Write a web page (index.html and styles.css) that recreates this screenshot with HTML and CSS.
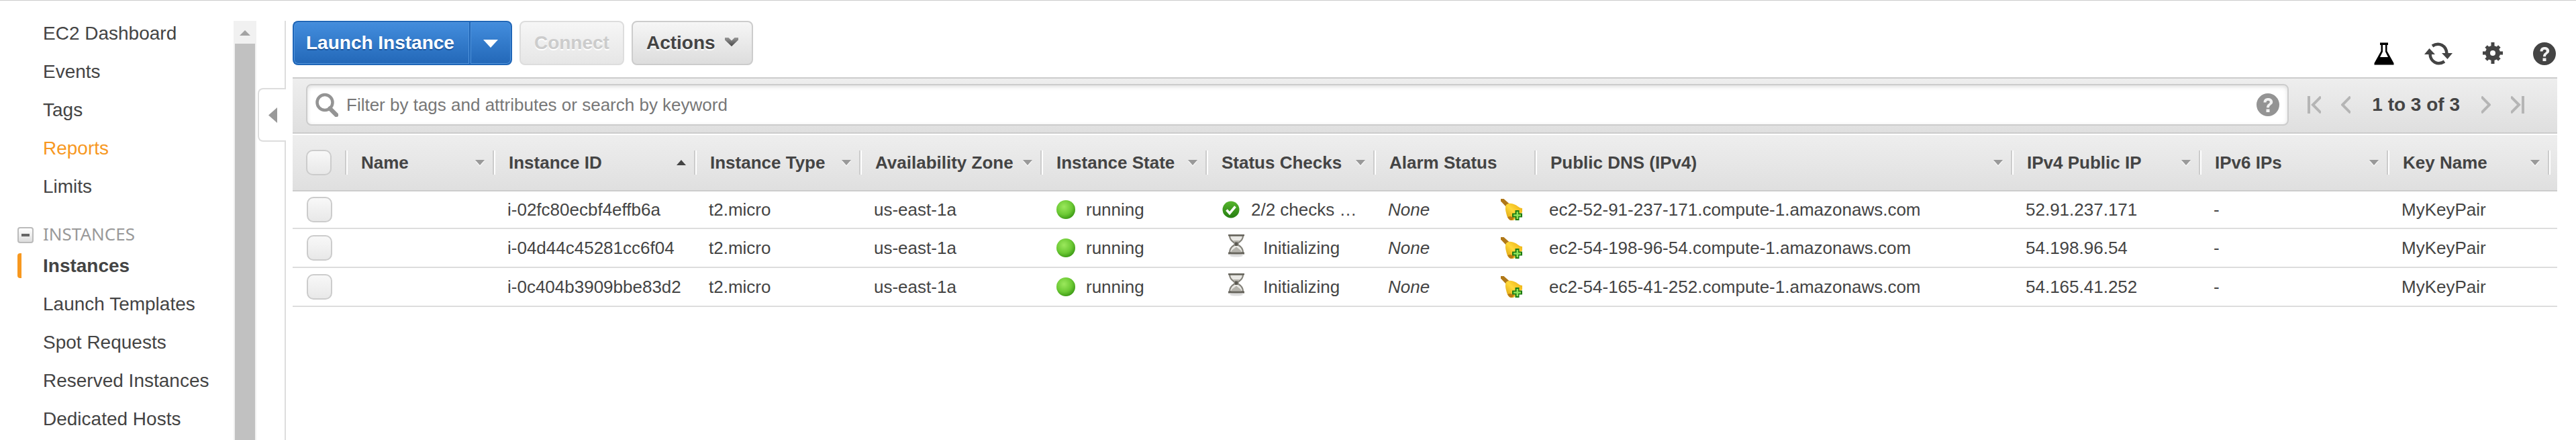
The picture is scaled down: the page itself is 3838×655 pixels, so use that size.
FILE: index.html
```html
<!DOCTYPE html>
<html lang="en">
<head>
<meta charset="utf-8">
<title>EC2 Management Console</title>
<link rel="stylesheet" href="styles.css">
</head>
<body>
<svg class="sprite" aria-hidden="true">
  <defs>
    <radialGradient id="g-ball" cx="0.4" cy="0.35" r="0.7"><stop offset="0" stop-color="#9be85c"/><stop offset="0.6" stop-color="#6cc934"/><stop offset="1" stop-color="#379512"/></radialGradient>
    <linearGradient id="g-ok" x1="0" y1="0" x2="0" y2="1"><stop offset="0" stop-color="#55b52c"/><stop offset="1" stop-color="#257d10"/></linearGradient>
    <linearGradient id="g-bell" x1="0" y1="1" x2="1" y2="0"><stop offset="0" stop-color="#d89a08"/><stop offset="0.5" stop-color="#ffd93a"/><stop offset="1" stop-color="#e8a80c"/></linearGradient>
    <linearGradient id="g-chev" x1="0" y1="0" x2="0" y2="1"><stop offset="0" stop-color="#999"/><stop offset="1" stop-color="#444"/></linearGradient>
  </defs>
  <symbol id="i-help" viewBox="0 0 34 34"><circle cx="17" cy="17" r="17" fill="currentColor"/><path d="M10.500 13.500C10.500 9 13.500 7 17.200 7s7 2 7 5.700c0 4.500-5.200 4.300-5.200 8.500h-4c0-5.800 4.800-5.600 4.800-8.300 0-1.400-1-2.200-2.600-2.200-1.700 0-2.600.9-2.700 2.800z" fill="#f2f2f2"/><rect x="14.500" y="23.500" width="5" height="4.500" fill="#f2f2f2"/></symbol>
  <symbol id="i-ball" viewBox="0 0 30 30"><circle cx="15" cy="15" r="15" fill="url(#g-ball)"/></symbol>
  <symbol id="i-ok" viewBox="0 0 26 26"><circle cx="13" cy="13" r="12.500" fill="url(#g-ok)"/><path d="M6.500 13.500l4.500 5 8.500-10" fill="none" stroke="#fff" stroke-width="3.500"/></symbol>
  <symbol id="i-glass" viewBox="0 0 26 42"><ellipse cx="13" cy="32.500" rx="10" ry="2" fill="#ddd"/><path d="M3 2.500h20c0 6-3 8-7.500 11.500v2.500C20 19 23 22 23 28H3c0-6 3-9 7.500-11.500V14C6 10.500 3 8.500 3 2.500z" fill="#e9e8e4" stroke="#85837b" stroke-width="2.200"/><path d="M1 1h24v2.500H1zM1 27.500h24v3H1z" fill="#66645c"/><path d="M8 10h10l-5 5zM5 27.500c1-4 5-5 8-8 3 3 7 4 8 8z" fill="#b5b3ac"/><path d="M11 12.500h4v5.500h-4z" fill="#5a5850"/></symbol>
  <symbol id="i-bell" viewBox="0 0 32 32"><path d="M0 0h4.500l9 8-4.500 5-9-9.500z" fill="#b07818"/><path d="M8 9c4-4 10-2 14 0 4 2 6 5 10 5v6L19 32h-5c-4-3-5-7-6-11-1-4-2-8 0-12z" fill="url(#g-bell)"/><path d="M10 27c1 3 4 5 7 5l3-4-6-2z" fill="#b87a14"/><path d="M21.500 17h6v4.500H32v6h-4.500V32h-6v-4.500H17v-6h4.500z" fill="#1d7a12"/><path d="M23.500 19h2.500v4.300h4v2.400h-4V30h-2.500v-4.300H19v-2.400h4.500z" fill="#8ee35a"/></symbol>
</svg>

<div class="console">
  <aside class="sidebar">
    <nav class="nav" aria-label="EC2">
      <ul class="nav-list">
        <li><a href="#">EC2 Dashboard</a></li>
        <li><a href="#">Events</a></li>
        <li><a href="#">Tags</a></li>
        <li><a href="#" class="hot">Reports</a></li>
        <li><a href="#">Limits</a></li>
      </ul>
      <div class="nav-group">
        <button class="fold" type="button" aria-label="Collapse instances"><span class="minus"></span></button>
        <span>INSTANCES</span>
      </div>
      <ul class="nav-list">
        <li class="current"><a href="#">Instances</a></li>
        <li><a href="#">Launch Templates</a></li>
        <li><a href="#">Spot Requests</a></li>
        <li><a href="#">Reserved Instances</a></li>
        <li><a href="#">Dedicated Hosts</a></li>
      </ul>
    </nav>
    <div class="scroll"><div class="scroll-up"><svg width="16" height="8" viewBox="0 0 16 8"><path d="M0 8l8-8 8 8z" fill="#a3a3a3"/></svg></div><div class="scroll-thumb"></div></div>
    <div class="splitter">
      <div class="split-top"></div>
      <button class="split-tab" type="button" aria-label="Hide navigation"><svg width="13" height="23" viewBox="0 0 13 23"><path d="M13 0v23L0 11.500z" fill="#999"/></svg></button>
      <div class="split-rest"></div>
    </div>
  </aside>

  <main class="main">
    <div class="actions">
      <div class="split-button">
        <button class="btn primary launch" type="button">Launch Instance</button>
        <button class="btn primary more" type="button" aria-label="More launch options"><svg width="22" height="12" viewBox="0 0 22 12"><path d="M0 0h22L11 12z" fill="#fff"/></svg></button>
      </div>
      <button class="btn" type="button" disabled>Connect</button>
      <button class="btn menu" type="button">Actions <svg width="20" height="14" viewBox="0 0 20 14"><path d="M0 1h5.500L10 5.500 14.500 1H20v3.500L10 14 0 4.500z" fill="url(#g-chev)"/></svg></button>
      <div class="tools">
        <button type="button" aria-label="Experiments"><svg width="30" height="34" viewBox="0 0 30 34"><path d="M9 0.500h12v3.500h-1.500v9L29.500 31v2.500H0.500V31L10.500 13V4H9z" fill="#000"/><path d="M13 4h4v10l4 8H9l4-8z" fill="#fff"/></svg></button>
        <button type="button" aria-label="Refresh"><svg width="42" height="34" viewBox="0 0 42 34"><path d="M12 5.500C22-1 33 5 33.500 17M30 28.500C20 35 9 29 8.500 17" fill="none" stroke="#444" stroke-width="4.500"/><path d="M26 16h16l-7.500 9zM0 18h16L7.500 9z" fill="#444"/></svg></button>
        <button type="button" aria-label="Settings"><svg width="30" height="34" viewBox="0 0 30 34"><g fill="#444"><circle cx="15" cy="16" r="11"/><path d="M12.500 0h5v32h-5zM0 13.500h30v5H0z"/><path d="M12.500 2h5v28h-5z" transform="rotate(45 15 16)"/><path d="M12.500 2h5v28h-5z" transform="rotate(-45 15 16)"/></g><circle cx="15" cy="16" r="4" fill="#fff"/></svg></button>
        <button type="button" aria-label="Help"><svg width="34" height="34"><use href="#i-help"/></svg></button>
      </div>
    </div>

    <div class="filter">
      <label class="search">
        <svg width="34" height="36" viewBox="0 0 34 36"><circle cx="14" cy="14.500" r="11.500" fill="none" stroke="#949494" stroke-width="4.500"/><path d="M21.500 23.500l9.500 9.500" stroke="#949494" stroke-width="6.500" stroke-linecap="round"/></svg>
        <input type="text" aria-label="Filter" placeholder="Filter by tags and attributes or search by keyword">
        <svg class="hint" width="34" height="34"><use href="#i-help"/></svg>
      </label>
      <div class="pager">
        <button type="button" aria-label="First page"><svg width="20" height="26" viewBox="0 0 20 26"><path d="M2 0v26M20 1L8 13l12 12"/></svg></button>
        <button type="button" aria-label="Previous page"><svg width="14" height="26" viewBox="0 0 14 26"><path d="M14 1L2 13l12 12"/></svg></button>
        <span class="count">1 to 3 of 3</span>
        <button type="button" aria-label="Next page"><svg width="14" height="26" viewBox="0 0 14 26"><path d="M0 1l12 12L0 25"/></svg></button>
        <button type="button" aria-label="Last page"><svg width="20" height="26" viewBox="0 0 20 26"><path d="M0 1l12 12L0 25M18 0v26"/></svg></button>
      </div>
    </div>

    <table class="grid">
      <colgroup><col class="w-check"><col class="w-name"><col class="w-id"><col class="w-type"><col class="w-zone"><col class="w-state"><col class="w-checks"><col class="w-alarm"><col class="w-dns"><col class="w-ip"><col class="w-ip"><col class="w-key"><col class="w-end"></colgroup>
      <thead>
        <tr>
          <th><div class="head check"><input type="checkbox" aria-label="Select all"></div></th>
          <th><div class="head">Name<i class="down"></i></div></th>
          <th><div class="head">Instance ID<i class="up"></i></div></th>
          <th><div class="head">Instance Type<i class="down"></i></div></th>
          <th><div class="head">Availability Zone<i class="down"></i></div></th>
          <th><div class="head">Instance State<i class="down"></i></div></th>
          <th><div class="head">Status Checks<i class="down"></i></div></th>
          <th><div class="head">Alarm Status</div></th>
          <th><div class="head">Public DNS (IPv4)<i class="down"></i></div></th>
          <th><div class="head">IPv4 Public IP<i class="down"></i></div></th>
          <th><div class="head">IPv6 IPs<i class="down"></i></div></th>
          <th><div class="head">Key Name<i class="down"></i></div></th>
          <th></th>
        </tr>
      </thead>
      <tbody>
        <tr>
          <td class="pick"><input type="checkbox" aria-label="Select i-02fc80ecbf4effb6a"></td><td></td><td>i-02fc80ecbf4effb6a</td><td>t2.micro</td><td>us-east-1a</td>
          <td><div class="state"><svg width="28" height="30"><use href="#i-ball"/></svg>running</div></td>
          <td><div class="state"><svg width="28" height="26"><use href="#i-ok"/></svg>2/2 checks …</div></td>
          <td><div class="alarm"><em>None</em><svg width="32" height="32"><use href="#i-bell"/></svg></div></td>
          <td>ec2-52-91-237-171.compute-1.amazonaws.com</td><td>52.91.237.171</td><td>-</td><td>MyKeyPair</td><td></td>
        </tr>
        <tr>
          <td class="pick"><input type="checkbox" aria-label="Select i-04d44c45281cc6f04"></td><td></td><td>i-04d44c45281cc6f04</td><td>t2.micro</td><td>us-east-1a</td>
          <td><div class="state"><svg width="28" height="30"><use href="#i-ball"/></svg>running</div></td>
          <td><div class="state wait"><svg width="28" height="42"><use href="#i-glass"/></svg>Initializing</div></td>
          <td><div class="alarm"><em>None</em><svg width="32" height="32"><use href="#i-bell"/></svg></div></td>
          <td>ec2-54-198-96-54.compute-1.amazonaws.com</td><td>54.198.96.54</td><td>-</td><td>MyKeyPair</td><td></td>
        </tr>
        <tr>
          <td class="pick"><input type="checkbox" aria-label="Select i-0c404b3909bbe83d2"></td><td></td><td>i-0c404b3909bbe83d2</td><td>t2.micro</td><td>us-east-1a</td>
          <td><div class="state"><svg width="28" height="30"><use href="#i-ball"/></svg>running</div></td>
          <td><div class="state wait"><svg width="28" height="42"><use href="#i-glass"/></svg>Initializing</div></td>
          <td><div class="alarm"><em>None</em><svg width="32" height="32"><use href="#i-bell"/></svg></div></td>
          <td>ec2-54-165-41-252.compute-1.amazonaws.com</td><td>54.165.41.252</td><td>-</td><td>MyKeyPair</td><td></td>
        </tr>
      </tbody>
    </table>
  </main>
</div>
</body>
</html>
```
FILE: styles.css
```css
* { box-sizing: border-box; }
body {
  margin: 0;
  background: #fff;
  color: #444;
  font-family: "Liberation Sans", Arial, sans-serif;
  font-size: 26px;
}
button { font: inherit; cursor: pointer; }
svg { display: block; flex: none; }
.sprite { position: absolute; width: 0; height: 0; }

.console {
  display: flex;
  height: 100vh;
  padding-top: 30px;
  border-top: 1px solid #ccc;
  overflow: hidden;
}

/* Sidebar */
.sidebar { display: flex; flex: none; width: 426px; }
.nav { flex: 1; overflow: hidden; padding-left: 26px; }
.nav-list { list-style: none; margin: 0; padding: 0; }
.nav-list li { display: flex; align-items: center; height: 37px; margin-bottom: 20px; padding-left: 38px; }
.nav-list a { color: #444; font-size: 28px; line-height: 32px; text-decoration: none; white-space: nowrap; }
.nav-list .hot { color: #f7981f; }
.nav-list .current { padding-left: 32px; border-left: 6px solid #f7981f; border-radius: 4px 0 0 4px; }
.current a { font-weight: bold; }
.nav-group {
  display: flex;
  align-items: center;
  gap: 14px;
  height: 36px;
  margin: 34px 0 11px;
  color: #999;
  font-family: "Noto Sans", sans-serif;
}
.fold {
  display: flex;
  align-items: center;
  justify-content: center;
  width: 24px;
  height: 24px;
  margin-top: 4px;
  padding: 0;
  border: 2px solid #bbb;
  border-radius: 4px;
  background: linear-gradient(#fff, #ddd);
}
.minus { width: 12px; height: 4px; background: #666; }

.scroll { display: flex; flex: none; flex-direction: column; width: 34px; background: #f1f1f1; }
.scroll-up { display: flex; align-items: center; justify-content: center; height: 34px; padding-top: 2px; }
.scroll-thumb { flex: 1; margin: 0 2px; background: #c1c1c1; }

.splitter { display: flex; flex-direction: column; flex: none; width: 44px; padding-left: 2px; }
.split-top { height: 100px; border-right: 2px solid #ddd; }
.split-tab {
  display: flex;
  align-items: center;
  justify-content: flex-end;
  height: 80px;
  padding: 0 13px;
  border: 2px solid #ddd;
  border-right: 0;
  border-radius: 8px 0 0 8px;
  background: #fff;
}
.split-rest { flex: 1; border-right: 2px solid #ddd; }

/* Actions */
.main { flex: 1; min-width: 0; padding: 0 28px 0 10px; }
.actions { display: flex; align-items: flex-start; gap: 11px; height: 84px; }
.btn {
  display: flex;
  align-items: center;
  height: 66px;
  padding: 0 20px;
  border: 2px solid #ccc;
  border-radius: 8px;
  background: linear-gradient(#f6f6f6, #ddd);
  color: #444;
  font-size: 28px;
  font-weight: bold;
  text-shadow: 0 2px 0 #fff;
}
.btn:disabled { border-color: #ddd; background: linear-gradient(#f6f6f6, #e6e6e6); color: #ccc; }
.menu { gap: 14px; }
.menu svg { margin-bottom: 4px; }
.split-button { display: flex; }
.primary {
  border-color: #1f66b8;
  background: linear-gradient(#438ddd, #2368b8);
  box-shadow: inset 0 0 0 1px #5294db;
  color: #fff;
  text-shadow: 0 2px 0 #1c559b;
}
.launch { padding: 0 22px 0 18px; border-right: 0; border-radius: 8px 0 0 8px; }
.more { border-radius: 0 8px 8px 0; padding: 2px 19px 0; }
.tools { display: flex; align-items: center; gap: 45px; height: 98px; margin-left: auto; padding: 0 2px; }
.tools button { padding: 0; border: 0; background: none; color: #444; }

/* Filter bar */
.filter {
  display: flex;
  align-items: center;
  height: 84px;
  padding: 0 49px 2px 20px;
  border-top: 2px solid #ccc;
  border-bottom: 2px solid #ccc;
  background: linear-gradient(#eee, #dfdfdf);
}
.search {
  display: flex;
  align-items: center;
  flex: 1;
  gap: 12px;
  height: 62px;
  padding: 0 12px;
  border: 2px solid #ccc;
  border-radius: 8px;
  background: #fff;
  box-shadow: inset 0 2px 6px #ddd;
}
.search input { flex: 1; min-width: 0; padding: 0; border: 0; outline: 0; background: none; color: #444; font: inherit; }
.search input::placeholder { color: #777; opacity: 1; }
.hint { color: #949494; }
.pager { display: flex; align-items: center; gap: 30px; margin-left: 28px; }
.pager button { padding: 0; border: 0; background: none; }
.pager path { fill: none; stroke: #b5b5b5; stroke-width: 4; }
.count { margin: 0 2px; font-size: 28px; font-weight: bold; }

/* Instances table */
.grid { width: 100%; margin-top: 2px; border-collapse: separate; border-spacing: 0; table-layout: fixed; }
.w-check { width: 82px; }
.w-name { width: 220px; }
.w-id { width: 300px; }
.w-type, .w-state { width: 246px; }
.w-zone { width: 270px; }
.w-checks { width: 250px; }
.w-alarm, .w-key { width: 240px; }
.w-ip { width: 280px; }
.w-end { width: 10px; }
.grid thead { background: linear-gradient(#eee, #dfdfdf); }
.grid th { height: 84px; padding: 0; border-bottom: 2px solid #ccc; text-align: left; }
.head {
  display: flex;
  align-items: center;
  justify-content: space-between;
  height: 36px;
  padding: 0 14px 0 20px;
  border-right: 2px solid #fff;
  box-shadow: inset -2px 0 0 #ccc;
  white-space: nowrap;
}
.up, .down { border: 7px solid transparent; }
.down { border-top: 8px solid #999; border-bottom: 0; filter: drop-shadow(0 2px 0 #f6f6f6); }
.up { border-bottom: 8px solid #444; border-top: 0; }
.grid td { height: 58px; padding: 0 0 0 18px; border-bottom: 2px solid #ddd; white-space: nowrap; }
.grid tbody tr:first-child td { height: 56px; }
.grid .pick { padding-left: 21px; }
.grid input {
  display: block;
  appearance: none;
  width: 38px;
  height: 38px;
  margin: 0;
  border: 2px solid #ccc;
  border-radius: 10px;
  background: linear-gradient(#f8f8f8, #e8e8e8);
}
.state { display: flex; align-items: center; gap: 16px; padding-left: 2px; }
.wait { gap: 26px; padding-left: 10px; }
.alarm { display: flex; align-items: center; justify-content: space-between; padding-right: 22px; }
```
